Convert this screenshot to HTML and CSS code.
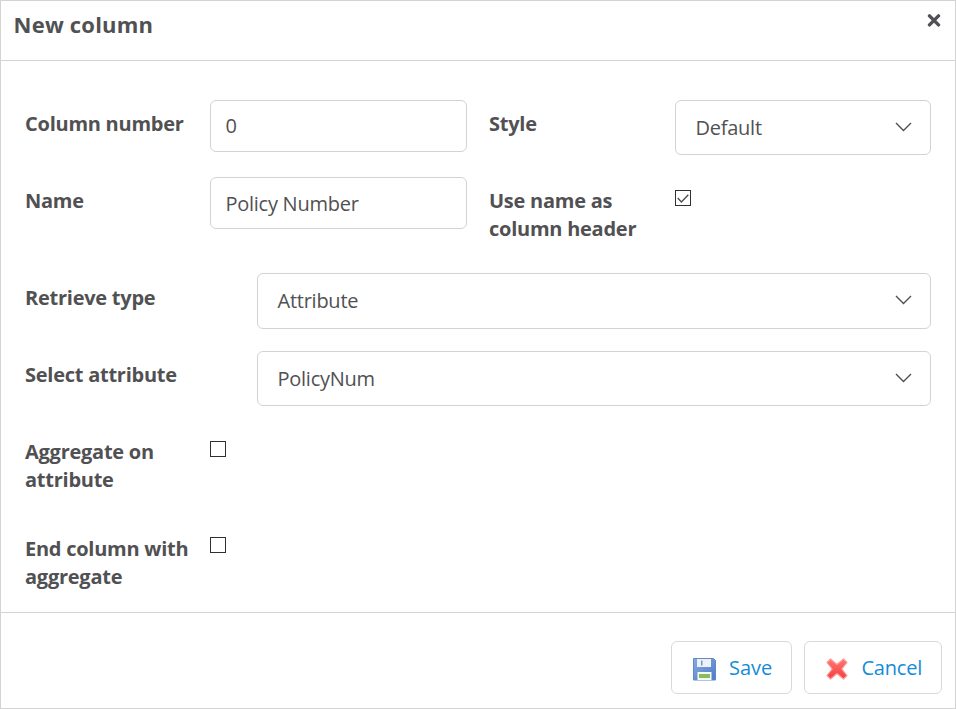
FILE: index.html
```
<!DOCTYPE html>
<html lang="en">
<head>
<meta charset="utf-8">
<title>New column</title>
<link rel="stylesheet" href="styles.css">
</head>
<body>
<div class="dialog">
  <header class="header">
    <h1 class="title">New column</h1>
    <button class="close" aria-label="Close"><svg width="14" height="14" viewBox="0 0 14 14"><path d="M2.500 2.900l9 9M11.500 2.900l-9 9" stroke="#505055" stroke-width="3.400" stroke-linecap="round" fill="none"/></svg></button>
  </header>
  <main class="body">
    <div class="row short">
      <div class="label">Column number</div>
      <div class="input">0</div>
      <div class="label">Style</div>
      <div class="select"><span>Default</span><svg class="chevron" width="18" height="10" viewBox="0 0 18 10"><path d="M1 1l7.500 7.500L16 1"/></svg></div>
    </div>
    <div class="row tall">
      <div class="label">Name</div>
      <div class="input lower">Policy Number</div>
      <div class="label">Use name as column header</div>
      <div class="check"><svg width="14" height="14" viewBox="0 0 14 14"><path d="M1.700 7l3.700 3.900L12.300 3.700"/></svg></div>
    </div>
    <div class="row wide short">
      <div class="label">Retrieve type</div>
      <div class="select raised"><span>Attribute</span><svg class="chevron" width="18" height="10" viewBox="0 0 18 10"><path d="M1 1l7.500 7.500L16 1"/></svg></div>
    </div>
    <div class="row wide short">
      <div class="label">Select attribute</div>
      <div class="select"><span>PolicyNum</span><svg class="chevron" width="18" height="10" viewBox="0 0 18 10"><path d="M1 1l7.500 7.500L16 1"/></svg></div>
    </div>
    <div class="row tall">
      <div class="label">Aggregate on attribute</div>
      <div class="check"></div>
    </div>
    <div class="row last">
      <div class="label">End column with aggregate</div>
      <div class="check high"></div>
    </div>
  </main>
  <footer class="footer">
    <button class="button save">
      <svg width="24" height="24" viewBox="0 0 24 24">
        <defs>
          <linearGradient id="disk" x2="1" y2="1"><stop offset="0" stop-color="#86aae2"/><stop offset="1" stop-color="#4f7bc6"/></linearGradient>
        </defs>
        <path d="M1.500 1.500h20l2 2v19.500h-22z" fill="url(#disk)" stroke="#6388c6" stroke-linejoin="round"/>
        <path d="M5 2h14v8H5z" fill="#edf2fa"/>
        <path d="M9 3.500h1.500v5H9z" fill="#7797cc"/>
        <path d="M5.500 15h14v8h-14z" fill="#f7faf5"/>
        <path d="M7 17h11v4H7z" fill="#83c05c"/>
      </svg>
      <span>Save</span>
    </button>
    <button class="button cancel">
      <svg width="24" height="24" viewBox="0 0 24 24">
        <defs>
          <linearGradient id="cross" x2="0" y2="1"><stop offset="0" stop-color="#ff7773"/><stop offset="1" stop-color="#f43d40"/></linearGradient>
        </defs>
        <path d="M5.500 2L12 7.500 18.500 2 22 5.500 16.800 12l5.200 6.500-3.500 3.500L12 16.500 5.500 22 2 18.500 7.200 12 2 5.500z" fill="url(#cross)" stroke="#ff9a97" stroke-width="1.200" stroke-linejoin="round"/>
      </svg>
      <span>Cancel</span>
    </button>
  </footer>
</div>
</body>
</html>
```
FILE: styles.css
```
* { box-sizing: border-box; }
body {
  margin: 0;
  background: #fff;
  color: #515153;
  font: 20px/28px "Open Sans", "Noto Sans", sans-serif;
  letter-spacing: -0.25px;
}
.dialog {
  display: flex;
  flex-direction: column;
  height: 709px;
  border: 1px solid #d3d3d3;
}
.header {
  display: flex;
  justify-content: space-between;
  height: 60px;
  padding: 8px 14px 0 12.6px;
  border-bottom: 1px solid #d3d3d3;
}
.title { margin: 0; font-size: 22px; line-height: 30px; font-weight: 700; letter-spacing: 0.2px; }
.close { height: 14px; margin-top: 4px; padding: 0; border: 0; background: none; }
.close svg, .check svg { display: block; }
.body { flex: 1; padding: 39px 24px 0; }
.row { display: grid; grid-template-columns: 185px 257px 208px 256px; align-items: start; }
.row > :nth-child(3) { padding-left: 22px; }
.wide { grid-template-columns: 232px 674px; }
.short { height: 77px; }
.tall { height: 97px; }
.label { padding-top: 10px; font-weight: 700; }
.input, .select { border: 1px solid #d3d3d3; border-radius: 6px; background: #fff; }
.input { height: 52px; padding: 11px 14.4px; }
.lower { padding-top: 12px; }
.select {
  display: flex;
  justify-content: space-between;
  align-items: center;
  height: 55px;
  padding: 0 17px 0 19.5px;
}
.raised { height: 56px; margin-top: -1px; }
.chevron, .check svg { fill: none; stroke: #4f4f53; stroke-width: 1.4; }
.chevron { margin-top: -2px; }
.check { width: 16px; height: 16px; margin-top: 13px; border: 1px solid #303030; }
.high { margin-top: 12px; }
.footer {
  display: flex;
  justify-content: flex-end;
  gap: 12px;
  height: 96px;
  padding: 28px 13px 0;
  border-top: 1px solid #d3d3d3;
}
.button {
  display: flex;
  align-items: center;
  height: 53px;
  padding: 0 0 0 20px;
  gap: 13px;
  border: 1px solid #d9d9d9;
  border-radius: 6px;
  background: #fff;
  color: #148cd8;
  font: inherit;
  letter-spacing: -0.2px;
}
.button svg { position: relative; top: 1px; }
.save { width: 121px; letter-spacing: 0; }
.cancel { width: 138px; gap: 12.4px; }
```
